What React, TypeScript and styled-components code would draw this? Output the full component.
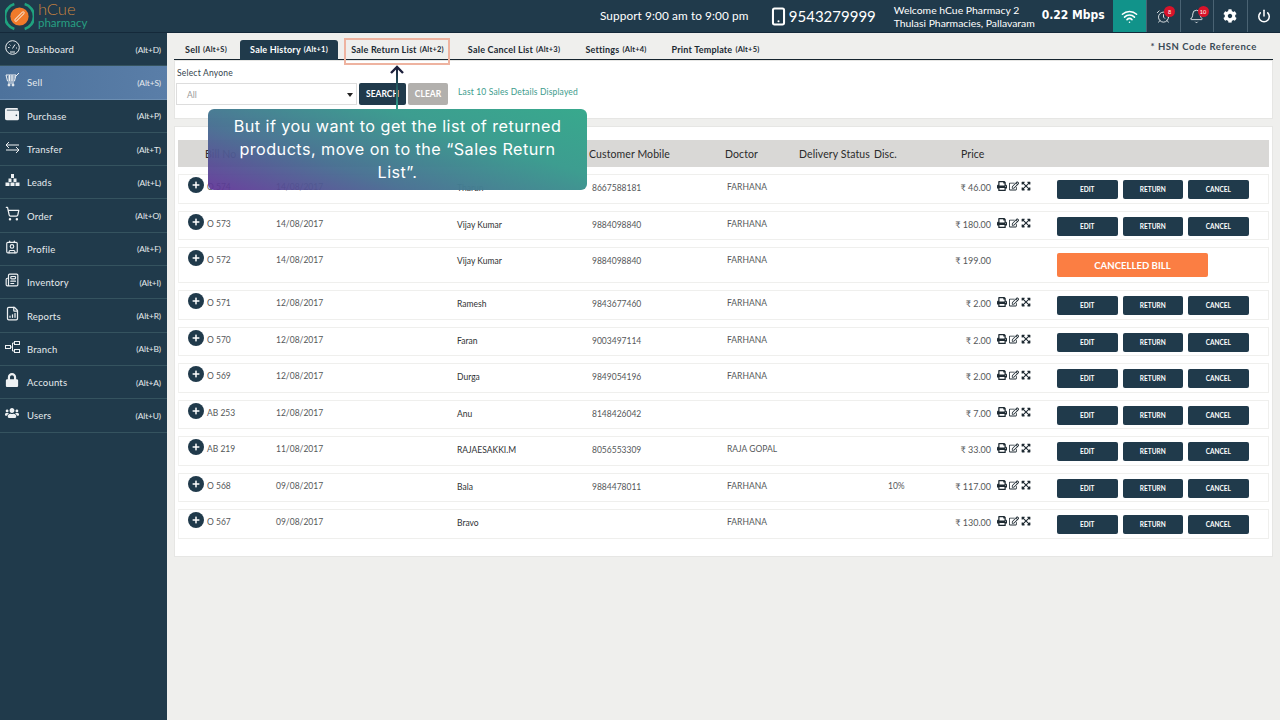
import React from "react";
import styled, { createGlobalStyle } from "styled-components";
import { AlarmClock, Bell, FileBarChart, Newspaper, ShoppingCart, Wifi, Power, Smartphone, Contact } from "lucide-react";
import { FaCog, FaLock, FaPrint, FaRegEdit, FaUsers, FaWallet, FaPlus, FaExpandArrowsAlt } from "react-icons/fa";

const Global = createGlobalStyle`
  html, body { margin: 0; padding: 0; background: #efefed; }
  * { box-sizing: border-box; }
  body { font-family: Lato, "Liberation Sans", sans-serif; }
`;
const Page = styled.div`
  position: relative; width: 1280px; height: 720px; overflow: hidden;
  display: flex; flex-direction: column; background: #efefed;
`;
const TopBar = styled.header`
  height: 33px; background: #203a4b; border-bottom: 1px solid #14293a;
  display: flex; align-items: stretch; color: #fff; flex: none;
`;
const LogoWrap = styled.div`
  width: 167px; display: flex; align-items: center; padding-left: 5px; gap: 4px;
`;
const LogoText = styled.div`
  display: flex; flex-direction: column; margin-top: -1px;
`;
const LogoTop = styled.div`color: #c9843f; font-size: 16.5px; line-height: 15px; font-weight: 300;`;
const LogoBottom = styled.div`color: #27a083; font-size: 11.5px; line-height: 12px;`;
const Support = styled.div`
  margin-left: 433px; width: 170px; font-size: 11.8px; letter-spacing: 0.1px; display: flex; align-items: center; height: 30px;
`;
const Phone = styled.div`
  width: 124px; display: flex; align-items: center; gap: 1px; font-size: 15px; height: 32px; margin-left: -1px; margin-right: 1px;
`;
const Welcome = styled.div`
  width: 148px; font-size: 10.4px; line-height: 13px; padding-top: 4px; white-space: nowrap;
`;
const Speed = styled.div`
  width: 71px; font-family: "DejaVu Sans Condensed", "DejaVu Sans", sans-serif; font-weight: 700; font-size: 12px; display: flex; align-items: center; height: 30px;
`;
const Cell = styled.div<{ $active?: boolean }>`
  position: relative; width: 33.5px; display: flex; align-items: center; justify-content: center;
  background: ${(p) => (p.$active ? "#11938a" : "transparent")};
  border-left: ${(p) => (p.$active ? "none" : "1px solid #4a6373")};
`;
const Badge = styled.span`
  position: absolute; top: 6px; left: 17px; width: 11px; height: 11px; border-radius: 50%;
  background: #d8132a; color: #fff; font-size: 5.5px; display: flex; align-items: center; justify-content: center;
`;
const Body = styled.div`display: flex; flex: 1; min-height: 0;`;
const Side = styled.nav`width: 167px; background: #203a4b; flex: none; display: flex; flex-direction: column;`;
const SideItem = styled.div<{ $active?: boolean }>`
  height: 33.3px; display: grid; grid-template-columns: 21px 1fr auto; align-items: center; padding: 1px 6px 0 6px;
  color: #e6ebee; font-size: 9.5px; letter-spacing: 0.2px;
  background: ${(p) => (p.$active ? "linear-gradient(90deg,#4d729c,#5a7ea8)" : "transparent")};
  border-bottom: 1px solid ${(p) => (p.$active ? "#6d8fb3" : "#35535f")};
`;
const SideIcon = styled.span`display: flex; margin: -5px 0 0 -1px; color: #eef1f3;`;
const Shortcut = styled.span`font-size: 8.4px; letter-spacing: -0.1px;`;
const Main = styled.main`flex: 1; min-width: 0; padding: 0 7px; display: flex; flex-direction: column;`;
const Tabs = styled.div`
  height: 28px; margin-top: -1px; padding: 8px 0 0; display: flex; align-items: stretch; border-bottom: 1px solid #16242e; position: relative;
`;
const Tab = styled.div<{ $active?: boolean; $w: number }>`
  width: ${(p) => p.$w}px; height: 20px; padding-bottom: 2px; display: flex; align-items: center; justify-content: center; white-space: nowrap;
  font-size: 9px; font-weight: 700; letter-spacing: 0.2px; color: ${(p) => (p.$active ? "#fff" : "#1c2a33")};
  background: ${(p) => (p.$active ? "#203a4b" : "transparent")};
  border-radius: ${(p) => (p.$active ? "3px 3px 0 0" : "0")};
  margin-left: ${(p) => (p.$active ? "2px" : "0")};
  small { font-size: 7.5px; margin-left: 3px; font-weight: 700; }
`;
const Hsn = styled.div`
  position: absolute; right: 16px; top: 9px; font-size: 9.5px; font-weight: 700; color: #3a4a55; letter-spacing: 0.55px;
`;
const FilterPanel = styled.section`
  height: 59px; background: #fff; border: 1px solid #e6e6e4; padding: 7px 1px 0 2px;
`;
const Label = styled.div`font-size: 8.5px; color: #33424c; letter-spacing: 0.2px; line-height: 11px;`;
const FilterRow = styled.div`display: flex; align-items: center; margin-top: 4px; height: 22px;`;
const SelectBox = styled.div`
  width: 181px; height: 22px; border: 1px solid #ddd; display: flex; align-items: center; justify-content: space-between;
  padding: 1px 3px 0 10px; font-size: 8.5px; color: #9a9a9a; margin-right: 2px; margin-left: -1px;
  &::after { content: ""; border: 3px solid transparent; border-top: 4px solid #222; margin-top: 4px; }
`;
const FilterBtn = styled.div<{ $grey?: boolean; $w: number }>`
  width: ${(p) => p.$w}px; height: 22px; margin-right: 2px; border-radius: 2px; display: flex; align-items: center; justify-content: center;
  font-size: 8.5px; font-weight: 700; color: #fff; background: ${(p) => (p.$grey ? "#b2b0ad" : "#203a4b")};
`;
const Note = styled.div`font-size: 8.5px; color: #3c9b8c; margin: -4px 0 0 8px; letter-spacing: 0.15px;`;
const TablePanel = styled.section`
  margin-top: 7px; height: 431px; background: #fff; border: 1px solid #e6e6e4; padding: 13px 3px 0;
`;
const HeadRow = styled.div`
  height: 27px; background: #d9d8d6; display: grid; grid-template-columns: 27px 384px 136px 74px 75px 87px 1fr;
  align-items: center; font-size: 10.5px; color: #2b2b2b; margin-bottom: 7px; letter-spacing: 0.1px;
`;
const HeadLabel = styled.span`white-space: nowrap;`;
const Row = styled.div<{ $tall?: boolean }>`
  height: ${(p) => (p.$tall ? "36px" : "29.5px")}; margin-bottom: 7px; border: 1px solid #efefed; border-left-color: #f3f3f1;
  display: grid; grid-template-columns: 28px 69px 181px 135px 135px 161px 45px 58px 66px 1fr;
  align-items: start; font-size: 8.5px; color: #45484a; position: relative;
`;
const PlusCol = styled.div`padding: 2px 0 0 9px;`;
const Plus = styled.span`
  width: 16px; height: 16px; border-radius: 50%; background: #203a4b; color: #fff; display: flex; align-items: center; justify-content: center;
`;
const Txt = styled.div<{ $dark?: boolean; $low?: boolean }>`
  padding-top: ${(p) => (p.$low ? "8px" : "7px")}; white-space: nowrap; color: ${(p) => (p.$dark ? "#2f3234" : "#55585a")};
`;
const Price = styled(Txt)`padding-top: 7px; font-size: 9px; text-align: right;`;
const Tools = styled.div`display: flex; gap: 2px; padding: 6px 0 0 6px; color: #1e2a32;`;
const Actions = styled.div`display: flex; gap: 5px; padding-top: 5px;`;
const Act = styled.div`
  width: 60.5px; height: 19px; background: #203a4b; color: #fff; border-radius: 2px; font-size: 6.5px; font-weight: 700;
  display: flex; align-items: center; justify-content: center;
`;
const CancelledBtn = styled.div`
  width: 151px; height: 24px; margin-top: 5px; background: #fb7e43; color: #fff; border-radius: 2px; font-size: 9.6px; font-weight: 700;
  display: flex; align-items: center; justify-content: center;
`;
const Highlight = styled.div`
  position: absolute; left: 344px; top: 38px; width: 106px; height: 27px; border: 2px solid #eeb3a0;
`;
const ArrowSvg = styled.svg`position: absolute; left: 387px; top: 64px;`;
const Callout = styled.div`
  position: absolute; left: 208px; top: 109px; width: 379px; height: 81px; border-radius: 6px;
  background: linear-gradient(18deg, rgba(95,50,150,.93) 0%, rgba(70,110,145,.96) 32%, #3d9d90 68%, #38a98d 100%);
  color: #fff; font-family: Inter, "Open Sans", sans-serif; font-size: 16.2px; line-height: 23px; text-align: center; padding: 6px 14px 0;
  letter-spacing: 0.45px;
`;

const G = { fill: "none", stroke: "currentColor", strokeWidth: 1 } as const;
const items: [string, string, React.ReactNode, boolean?][] = [
  ["Dashboard", "(Alt+D)", <svg width="15" height="15" viewBox="0 0 15 15" {...G}><circle cx="7.5" cy="7.5" r="6.8" /><path d="M7.5 8.5L10 4.5M3 7.5h1.5M11 8h1M5 12h5M4.5 4.5l1 1" /></svg>],
  ["Sell", "(Alt+S)", <svg width="15" height="14" viewBox="0 0 15 14" {...G}><path d="M1 2h10l-1.5 6h-7zM3 4h7M3 6h6.5M4.5 2v6M7 2v6M3 10h6" /><circle cx="4" cy="12" r="1" fill="currentColor" /><circle cx="8" cy="12" r="1" fill="currentColor" /><path d="M11 3l3-3" /></svg>, true],
  ["Purchase", "(Alt+P)", <FaWallet size={14} />],
  ["Transfer", "(Alt+T)", <svg width="15" height="13" viewBox="0 0 15 13" {...G}><path d="M14 4H1M4 1L1 4l3 3M1 9h13M11 6l3 3-3 3" /></svg>],
  ["Leads", "(Alt+L)", <svg width="15" height="12" viewBox="0 0 15 12" fill="currentColor"><rect x="6" y="0" width="3" height="4" /><rect x="3.5" y="4.5" width="3" height="3.5" /><rect x="8.5" y="4.5" width="3" height="3.5" /><rect x="0.5" y="8.5" width="4" height="3.5" /><rect x="5.5" y="8.5" width="4" height="3.5" /><rect x="10.5" y="8.5" width="4" height="3.5" /></svg>],
  ["Order", "(Alt+O)", <ShoppingCart size={15} />],
  ["Profile", "(Alt+F)", <Contact size={14} />],
  ["Inventory", "(Alt+I)", <Newspaper size={14} />],
  ["Reports", "(Alt+R)", <FileBarChart size={15} />],
  ["Branch", "(Alt+B)", <svg width="15" height="12" viewBox="0 0 15 12" {...G}><rect x=".5" y="4.5" width="5" height="3" /><rect x="9.5" y=".5" width="5" height="3" /><rect x="9.5" y="8.5" width="5" height="3" /><path d="M5.5 6h2M7.5 2v8M7.5 2h2M7.5 10h2" /></svg>],
  ["Accounts", "(Alt+A)", <FaLock size={14} />],
  ["Users", "(Alt+U)", <FaUsers size={14} />],
];
const rows = [
  ["O 574", "14/08/2017", "Tharun", "8667588181", "FARHANA", "", "46.00"],
  ["O 573", "14/08/2017", "Vijay Kumar", "9884098840", "FARHANA", "", "180.00"],
  ["O 572", "14/08/2017", "Vijay Kumar", "9884098840", "FARHANA", "", "199.00"],
  ["O 571", "12/08/2017", "Ramesh", "9843677460", "FARHANA", "", "2.00"],
  ["O 570", "12/08/2017", "Faran", "9003497114", "FARHANA", "", "2.00"],
  ["O 569", "12/08/2017", "Durga", "9849054196", "FARHANA", "", "2.00"],
  ["AB 253", "12/08/2017", "Anu", "8148426042", "", "", "7.00"],
  ["AB 219", "11/08/2017", "RAJAESAKKI.M", "8056553309", "RAJA GOPAL", "", "33.00"],
  ["O 568", "09/08/2017", "Bala", "9884478011", "FARHANA", "10%", "117.00"],
  ["O 567", "09/08/2017", "Bravo", "", "FARHANA", "", "130.00"],
];

export default function App() {
  return (
    <Page>
      <Global />
      <TopBar>
        <LogoWrap>
          <svg width="29" height="29" viewBox="0 0 28 28">
            <path d="M9 2A12.5 12.5 0 0 0 9 26" fill="none" stroke="#1fa37f" strokeWidth="2.6" />
            <path d="M19 2A12.5 12.5 0 0 1 19 26" fill="none" stroke="#1fa37f" strokeWidth="2.6" />
            <circle cx="14" cy="14" r="8.8" fill="#ef7a2a" />
            <path d="M10.5 17.5l7-7" stroke="#f6d9c0" strokeWidth="3" strokeLinecap="round" fill="none" />
            <path d="M10.5 17.5l7-7" stroke="#ef7a2a" strokeWidth="1.2" strokeLinecap="round" fill="none" />
          </svg>
          <LogoText>
            <LogoTop>hCue</LogoTop>
            <LogoBottom>pharmacy</LogoBottom>
          </LogoText>
        </LogoWrap>
        <Support>Support 9:00 am to 9:00 pm</Support>
        <Phone><Smartphone size={19} strokeWidth={2.6} />9543279999</Phone>
        <Welcome>Welcome hCue Pharmacy 2<br />Thulasi Pharmacies, Pallavaram</Welcome>
        <Speed>0.22 Mbps</Speed>
        <Cell $active><Wifi size={17} strokeWidth={2.2} /></Cell>
        <Cell><AlarmClock size={15} strokeWidth={1.3} /><Badge>8</Badge></Cell>
        <Cell><Bell size={15} strokeWidth={1.3} /><Badge>10</Badge></Cell>
        <Cell><FaCog size={14} /></Cell>
        <Cell><Power size={14} strokeWidth={2.6} /></Cell>
      </TopBar>
      <Body>
        <Side>
          {items.map(([n, s, ic, a]) => (
            <SideItem key={n} $active={a}>
              <SideIcon>{ic}</SideIcon>
              <span>{n}</span>
              <Shortcut>{s}</Shortcut>
            </SideItem>
          ))}
        </Side>
        <Main>
          <Tabs>
            <Tab $w={64}>Sell <small>(Alt+S)</small></Tab>
            <Tab $w={98} $active>Sale History <small>(Alt+1)</small></Tab>
            <Tab $w={119}>Sale Return List <small>(Alt+2)</small></Tab>
            <Tab $w={114}>Sale Cancel List <small>(Alt+3)</small></Tab>
            <Tab $w={90}>Settings <small>(Alt+4)</small></Tab>
            <Tab $w={109}>Print Template <small>(Alt+5)</small></Tab>
            <Hsn>* HSN Code Reference</Hsn>
          </Tabs>
          <FilterPanel>
            <Label>Select Anyone</Label>
            <FilterRow>
              <SelectBox>All</SelectBox>
              <FilterBtn $w={47}>SEARCH</FilterBtn>
              <FilterBtn $w={40} $grey>CLEAR</FilterBtn>
              <Note>Last 10 Sales Details Displayed</Note>
            </FilterRow>
          </FilterPanel>
          <TablePanel>
            <HeadRow>
              <span />
              <HeadLabel>Bill No</HeadLabel>
              <HeadLabel>Customer Mobile</HeadLabel>
              <HeadLabel>Doctor</HeadLabel>
              <HeadLabel>Delivery Status</HeadLabel>
              <HeadLabel>Disc.</HeadLabel>
              <HeadLabel>Price</HeadLabel>
            </HeadRow>
            {rows.map((r, i) => (
              <Row key={r[0]} $tall={i === 2}>
                <PlusCol><Plus><FaPlus size={8} /></Plus></PlusCol>
                <Txt>{r[0]}</Txt>
                <Txt>{r[1]}</Txt>
                <Txt $dark $low>{r[2]}</Txt>
                <Txt $low>{r[3]}</Txt>
                <Txt>{r[4]}</Txt>
                <Txt>{r[5]}</Txt>
                <Price>₹ {r[6]}</Price>
                {i === 2 ? <span /> : (
                  <Tools><FaPrint size={10} /><FaRegEdit size={10} /><FaExpandArrowsAlt size={10} /></Tools>
                )}
                {i === 2 ? (
                  <CancelledBtn>CANCELLED BILL</CancelledBtn>
                ) : (
                  <Actions><Act>EDIT</Act><Act>RETURN</Act><Act>CANCEL</Act></Actions>
                )}
              </Row>
            ))}
          </TablePanel>
        </Main>
      </Body>
      <Highlight />
      <ArrowSvg width="20" height="46" viewBox="0 0 20 46">
        <defs>
          <linearGradient id="arr" x1="0" y1="0" x2="0" y2="1">
            <stop offset="0" stopColor="#1c1f3a" />
            <stop offset="1" stopColor="#2fa58f" />
          </linearGradient>
        </defs>
        <rect x="9" y="3" width="2" height="43" fill="url(#arr)" />
        <path d="M4 9l6-6 6 6" fill="none" stroke="#1c1f3a" strokeWidth="2.4" />
      </ArrowSvg>
      <Callout>But if you want to get the list of returned products, move on to the “Sales Return List”.</Callout>
    </Page>
  );
}
